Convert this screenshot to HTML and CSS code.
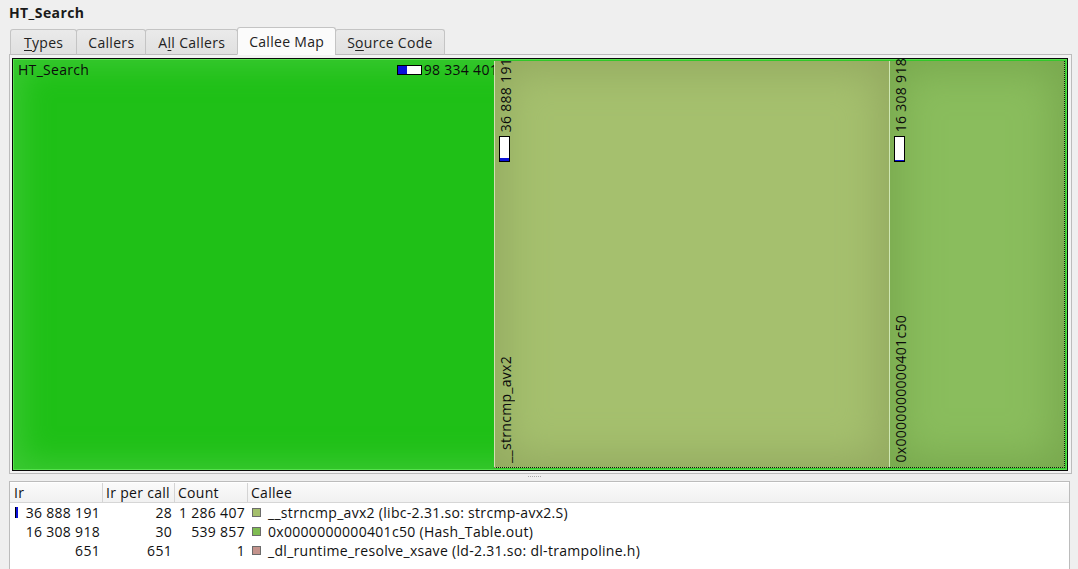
FILE: index.html
```html
<!DOCTYPE html>
<html>
<head>
<meta charset="utf-8">
<link rel="stylesheet" href="styles.css">
</head>
<body>
<div class="app">
  <div class="title">HT_Search</div>
  <div class="tabs">
    <div class="tab tab-wide"><u>T</u>ypes</div>
    <div class="tab">Callers</div>
    <div class="tab tab-mid">A<u>l</u>l Callers</div>
    <div class="tab active">Callee Map</div>
    <div class="tab">S<u>o</u>urce Code</div>
  </div>
  <div class="pane">
    <div class="treemap">
      <div class="own">
        <div class="hlabel">
          <span class="hname">HT_Search</span>
          <span class="hval"><span class="hbar"><span class="hfill" style="width:42%"></span></span><span class="hnum">98 334 401</span></span>
        </div>
      </div>
      <div class="kids">
        <div class="child c1">
          <div class="vtop">
            <span class="vtext">36 888 191</span>
            <span class="vbar"><span class="vfill" style="height:12%"></span></span>
          </div>
          <span class="vtext vname">__strncmp_avx2</span>
        </div>
        <div class="child c2">
          <div class="vtop">
            <span class="vtext">16 308 918</span>
            <span class="vbar"><span class="vfill" style="height:5%"></span></span>
          </div>
          <span class="vtext vname">0x0000000000401c50</span>
        </div>
      </div>
    </div>
  </div>
  <div class="splitter"><span class="grip"></span></div>
  <div class="list">
    <div class="row head">
      <div class="cell c-ir">Ir</div>
      <div class="cell c-per">Ir per call</div>
      <div class="cell c-count">Count</div>
      <div class="cell c-callee">Callee</div>
    </div>
    <div class="row">
      <div class="cell c-ir num"><span class="minibar"></span>36 888 191</div>
      <div class="cell c-per num">28</div>
      <div class="cell c-count num">1 286 407</div>
      <div class="cell c-callee"><span class="sw sw1"></span>__strncmp_avx2 (libc-2.31.so: strcmp-avx2.S)</div>
    </div>
    <div class="row">
      <div class="cell c-ir num">16 308 918</div>
      <div class="cell c-per num">30</div>
      <div class="cell c-count num">539 857</div>
      <div class="cell c-callee"><span class="sw sw2"></span>0x0000000000401c50 (Hash_Table.out)</div>
    </div>
    <div class="row">
      <div class="cell c-ir num">651</div>
      <div class="cell c-per num">651</div>
      <div class="cell c-count num">1</div>
      <div class="cell c-callee"><span class="sw sw3"></span>_dl_runtime_resolve_xsave (ld-2.31.so: dl-trampoline.h)</div>
    </div>
  </div>
</div>
</body>
</html>
```

FILE: styles.css
```css
* { box-sizing: border-box; }
html, body { margin: 0; padding: 0; }
body {
  background: #efefef;
  font-family: "Open Sans", "Noto Sans", sans-serif;
  font-size: 14px;
  letter-spacing: 0.3px;
  color: #111;
  width: 1078px;
  height: 569px;
  overflow: hidden;
}
.app { display: flex; flex-direction: column; }

.title {
  height: 27px;
  padding-left: 9px;
  font-weight: bold;
  font-size: 14px;
  letter-spacing: 0.4px;
  line-height: 26px;
  color: #1a1a1a;
}

.tabs {
  display: flex;
  align-items: flex-end;
  height: 28px;
  padding-left: 10px;
  margin-bottom: -1px;
  position: relative;
  z-index: 1;
}
.tab {
  height: 26px;
  padding: 0 11px;
  border: 1px solid #c4c4c4;
  border-bottom: 1px solid #bdbdbd;
  border-radius: 3px 3px 0 0;
  background: linear-gradient(#eaeaea, #e0e0e0);
  line-height: 26px;
  margin-right: -1px;
  color: #222;
}
.tab-wide { padding: 0 13px; }
.tab-mid { padding: 0 12px; }
.tab u { text-decoration: underline; text-underline-offset: 2px; }
.tab.active {
  height: 28px;
  background: #fbfbfb;
  border-bottom-color: #fbfbfb;
  line-height: 28px;
}

.pane {
  margin: 0 6px 0 9px;
  height: 420px;
  border: 1px solid #bcbcbc;
  padding: 3px 3px 2px 2px;
  background: #f3f3f3;
}

.treemap {
  height: 413px;
  border: 1px solid #0a0a0a;
  display: flex;
  overflow: hidden;
  background: #1fc017;
  box-shadow: inset 0 0 0 1px #55e24c, inset 0 0 30px 8px #3cc934;
}
.own {
  width: 481px;
  flex: none;
  padding: 2px 0 0 5px;
  overflow: hidden;
}
.hlabel {
  display: flex;
  justify-content: space-between;
  align-items: center;
  height: 17px;
  white-space: nowrap;
}
.hname { color: #0b0b0b; }
.hval { display: flex; align-items: center; margin-right: -4px; }
.hbar {
  width: 25px; height: 10px;
  border: 1px solid #000;
  background: #fff;
  display: flex;
  margin-right: 2px;
}
.hfill { background: #0a10d8; height: 100%; }
.hnum { color: #0b0b0b; }

.kids {
  flex: 1;
  display: flex;
  padding: 2px 2px 2px 0;
}
.child {
  display: flex;
  flex-direction: column;
  align-items: flex-start;
  padding: 0 0 4px 4px;
  border-bottom: 1px dotted #111;
}
.c1 {
  width: 395px;
  flex: none;
  background: #a5c06e;
  border-left: 1px solid #d3e0b3;
  box-shadow: inset 0 0 40px 10px #93a960;
}
.c2 {
  flex: 1;
  background: #8abd5d;
  border-left: 1px solid #cfe8b4;
  border-right: 1px dotted #111;
  box-shadow: inset 0 0 40px 10px #78a84e;
}
.vtop {
  display: flex;
  flex-direction: column;
  align-items: flex-start;
  margin-top: -3px;
}
.vtext {
  writing-mode: vertical-rl;
  transform: rotate(180deg);
  white-space: nowrap;
  line-height: 13px;
  color: #0b0b0b;
}
.vbar {
  margin-top: 4px;
  width: 11px;
  height: 26px;
  border: 1px solid #000;
  background: #fff;
  display: flex;
  flex-direction: column;
  justify-content: flex-end;
}
.vfill { background: #0a10d8; width: 100%; }
.vname { margin-top: auto; }

.splitter {
  height: 7px;
  position: relative;
}
.grip {
  position: absolute;
  left: 528px; top: 2px;
  width: 13px; height: 1px;
  background: repeating-linear-gradient(90deg, #a8a8a8 0 1px, transparent 1px 2px);
}

.list {
  margin: 0 8px 0 9px;
  border: 1px solid #bcbcbc;
  background: #fff;
  height: 100px;
  padding-top: 1px;
}
.row {
  display: flex;
  height: 19px;
  line-height: 19px;
  white-space: nowrap;
}
.row.head {
  height: 20px;
  line-height: 20px;
  background: linear-gradient(#fafafa, #f1f1f1);
  border-bottom: 1px solid #d6d6d6;
}
.cell { padding: 0 3px 0 4px; position: relative; }
.head .cell { border-right: 1px solid #d4d4d4; padding-left: 4px; }
.head .c-per, .head .c-count, .head .c-callee { padding-left: 3px; }
.head .c-callee { border-right: none; flex: 1; }
.c-ir { width: 93px; }
.c-per { width: 72px; }
.c-count { width: 73px; }
.c-callee { flex: 1; padding-left: 4px; display: flex; align-items: center; }
.num { text-align: right; padding-right: 3px; }
.minibar {
  position: absolute;
  left: 5px; top: 4px;
  width: 3px; height: 11px;
  background: #0a10d8;
  border-left: 1px solid #000;
}
.sw {
  width: 9px; height: 9px;
  border: 1px solid #6b6b6b;
  margin-right: 7px;
  flex: none;
}
.sw1 { background: #a4bf6c; }
.sw2 { background: #7fbc52; }
.sw3 { background: #c4938c; }
```
